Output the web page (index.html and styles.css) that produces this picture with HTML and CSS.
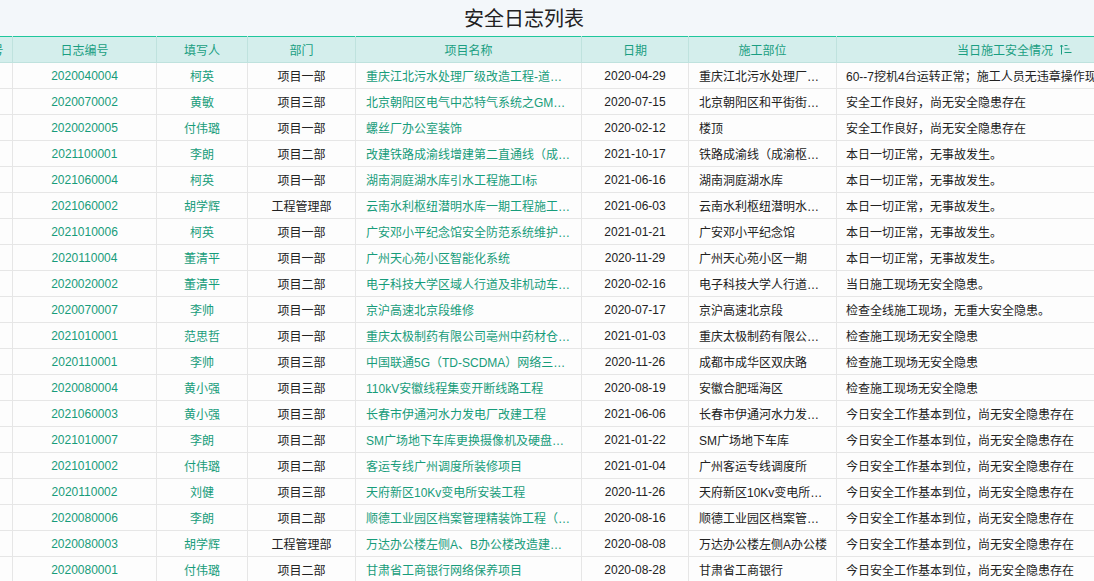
FILE: index.html
```html
<!DOCTYPE html>
<html lang="zh">
<head>
<meta charset="utf-8">
<title>安全日志列表</title>
<link rel="stylesheet" href="styles.css">
</head>
<body>
<div class="page">
  <div class="title-bar"><h1 class="title">安全日志列表</h1></div>
  <div class="grid-wrap">
    <table class="grid">
      <colgroup>
        <col class="c-no"><col class="c-id"><col class="c-person"><col class="c-dept"><col class="c-proj"><col class="c-date"><col class="c-place"><col class="c-status">
      </colgroup>
      <thead>
        <tr>
          <th>序号</th><th>日志编号</th><th>填写人</th><th>部门</th><th>项目名称</th><th>日期</th><th>施工部位</th>
          <th><span class="th-sort">当日施工安全情况<svg class="sort-icon" width="12" height="11" viewBox="0 0 12 11"><path d="M1.5 1v9.5M0 2.8L1.5 1 3 2.8" stroke="#1a9e82" stroke-width="1" fill="none"/><path d="M4.5 1.5h3M4.5 5h5M4.5 8.5h7" stroke="#1a9e82" stroke-width="1.2"/></svg></span></th>
        </tr>
      </thead>
      <tbody>
        <tr><td></td><td class="g">2020040004</td><td class="g">柯英</td><td>项目一部</td><td class="g l">重庆江北污水处理厂级改造工程-道路及管网工程</td><td>2020-04-29</td><td class="l p">重庆江北污水处理厂二级改造</td><td class="l">60--7挖机4台运转正常；施工人员无违章操作现象，安全帽佩戴齐全</td></tr>
        <tr><td></td><td class="g">2020070002</td><td class="g">黄敏</td><td>项目三部</td><td class="g l">北京朝阳区电气中芯特气系统之GM系统工程</td><td>2020-07-15</td><td class="l p">北京朝阳区和平街街道办事处</td><td class="l">安全工作良好，尚无安全隐患存在</td></tr>
        <tr><td></td><td class="g">2020020005</td><td class="g">付伟璐</td><td>项目一部</td><td class="g l">螺丝厂办公室装饰</td><td>2020-02-12</td><td class="l p">楼顶</td><td class="l">安全工作良好，尚无安全隐患存在</td></tr>
        <tr><td></td><td class="g">2021100001</td><td class="g">李朗</td><td>项目二部</td><td class="g l">改建铁路成渝线增建第二直通线（成渝枢纽）工程</td><td>2021-10-17</td><td class="l p">铁路成渝线（成渝枢纽）</td><td class="l">本日一切正常，无事故发生。</td></tr>
        <tr><td></td><td class="g">2021060004</td><td class="g">柯英</td><td>项目一部</td><td class="g l">湖南洞庭湖水库引水工程施工I标</td><td>2021-06-16</td><td class="l p">湖南洞庭湖水库</td><td class="l">本日一切正常，无事故发生。</td></tr>
        <tr><td></td><td class="g">2021060002</td><td class="g">胡学辉</td><td>工程管理部</td><td class="g l">云南水利枢纽潜明水库一期工程施工三标</td><td>2021-06-03</td><td class="l p">云南水利枢纽潜明水库大坝</td><td class="l">本日一切正常，无事故发生。</td></tr>
        <tr><td></td><td class="g">2021010006</td><td class="g">柯英</td><td>项目一部</td><td class="g l">广安邓小平纪念馆安全防范系统维护项目</td><td>2021-01-21</td><td class="l p">广安邓小平纪念馆</td><td class="l">本日一切正常，无事故发生。</td></tr>
        <tr><td></td><td class="g">2020110004</td><td class="g">董清平</td><td>项目一部</td><td class="g l">广州天心苑小区智能化系统</td><td>2020-11-29</td><td class="l p">广州天心苑小区一期</td><td class="l">本日一切正常，无事故发生。</td></tr>
        <tr><td></td><td class="g">2020020002</td><td class="g">董清平</td><td>项目二部</td><td class="g l">电子科技大学区域人行道及非机动车道改造工程</td><td>2020-02-16</td><td class="l p">电子科技大学人行道区域</td><td class="l">当日施工现场无安全隐患。</td></tr>
        <tr><td></td><td class="g">2020070007</td><td class="g">李帅</td><td>项目一部</td><td class="g l">京沪高速北京段维修</td><td>2020-07-17</td><td class="l p">京沪高速北京段</td><td class="l">检查全线施工现场，无重大安全隐患。</td></tr>
        <tr><td></td><td class="g">2021010001</td><td class="g">范思哲</td><td>项目一部</td><td class="g l">重庆太极制药有限公司亳州中药材仓储项目</td><td>2021-01-03</td><td class="l p">重庆太极制药有限公司仓库</td><td class="l">检查施工现场无安全隐患</td></tr>
        <tr><td></td><td class="g">2020110001</td><td class="g">李帅</td><td>项目三部</td><td class="g l">中国联通5G（TD-SCDMA）网络三期工程</td><td>2020-11-26</td><td class="l p">成都市成华区双庆路</td><td class="l">检查施工现场无安全隐患</td></tr>
        <tr><td></td><td class="g">2020080004</td><td class="g">黄小强</td><td>项目三部</td><td class="g l">110kV安徽线程集变开断线路工程</td><td>2020-08-19</td><td class="l p">安徽合肥瑶海区</td><td class="l">检查施工现场无安全隐患</td></tr>
        <tr><td></td><td class="g">2021060003</td><td class="g">黄小强</td><td>项目三部</td><td class="g l">长春市伊通河水力发电厂改建工程</td><td>2021-06-06</td><td class="l p">长春市伊通河水力发电厂</td><td class="l">今日安全工作基本到位，尚无安全隐患存在</td></tr>
        <tr><td></td><td class="g">2021010007</td><td class="g">李朗</td><td>项目二部</td><td class="g l">SM广场地下车库更换摄像机及硬盘录像机</td><td>2021-01-22</td><td class="l p">SM广场地下车库</td><td class="l">今日安全工作基本到位，尚无安全隐患存在</td></tr>
        <tr><td></td><td class="g">2021010002</td><td class="g">付伟璐</td><td>项目二部</td><td class="g l">客运专线广州调度所装修项目</td><td>2021-01-04</td><td class="l p">广州客运专线调度所</td><td class="l">今日安全工作基本到位，尚无安全隐患存在</td></tr>
        <tr><td></td><td class="g">2020110002</td><td class="g">刘健</td><td>项目三部</td><td class="g l">天府新区10Kv变电所安装工程</td><td>2020-11-26</td><td class="l p">天府新区10Kv变电所附近</td><td class="l">今日安全工作基本到位，尚无安全隐患存在</td></tr>
        <tr><td></td><td class="g">2020080006</td><td class="g">李朗</td><td>项目二部</td><td class="g l">顺德工业园区档案管理精装饰工程（二期）</td><td>2020-08-16</td><td class="l p">顺德工业园区档案管理楼</td><td class="l">今日安全工作基本到位，尚无安全隐患存在</td></tr>
        <tr><td></td><td class="g">2020080003</td><td class="g">胡学辉</td><td>工程管理部</td><td class="g l">万达办公楼左侧A、B办公楼改造建设工程</td><td>2020-08-08</td><td class="l p">万达办公楼左侧A办公楼</td><td class="l">今日安全工作基本到位，尚无安全隐患存在</td></tr>
        <tr><td></td><td class="g">2020080001</td><td class="g">付伟璐</td><td>项目二部</td><td class="g l">甘肃省工商银行网络保养项目</td><td>2020-08-28</td><td class="l p">甘肃省工商银行</td><td class="l">今日安全工作基本到位，尚无安全隐患存在</td></tr>
      </tbody>
    </table>
  </div>
</div>
</body>
</html>
```

FILE: styles.css
```css
html, body {
  margin: 0;
  padding: 0;
  background: #fdfdfd;
}
body {
  font-family: "Liberation Sans", "Noto Sans CJK SC", sans-serif;
  font-size: 12px;
  color: #222;
  overflow: hidden;
}
.page {
  width: 1094px;
  height: 581px;
  overflow: hidden;
}
.title-bar {
  height: 36px;
  background: #f3f7fa;
  display: flex;
  align-items: center;
  justify-content: center;
  padding-right: 46px;
}
.title {
  margin: 0;
  font-family: "Noto Sans CJK SC", sans-serif;
  font-size: 20px;
  font-weight: normal;
  line-height: 36px;
  color: #222;
}
.grid-wrap {
  overflow: hidden;
  width: 1094px;
}
.grid {
  margin-left: -30px;
  width: 1222px;
  table-layout: fixed;
  border-collapse: collapse;
  border-top: 1px solid #1fc79c;
}
.c-no { width: 42px; }
.c-id { width: 144px; }
.c-person { width: 91px; }
.c-dept { width: 108px; }
.c-proj { width: 226px; }
.c-date { width: 107px; }
.c-place { width: 148px; }
.c-status { width: 356px; }
.grid th {
  height: 25px;
  padding: 0 4px;
  background: #d4eeec;
  color: #1a9e82;
  font-weight: normal;
  border-left: 1px solid #bfe2de;
  border-right: 1px solid #bfe2de;
  border-bottom: 1px solid #bfe2de;
  white-space: nowrap;
  overflow: hidden;
  text-align: center;
}
.th-sort {
  display: inline-flex;
  align-items: center;
  gap: 7px;
}
.sort-icon {
  display: block;
}
.grid td {
  height: 25px;
  padding: 0 10px;
  border: 1px solid #e6e6e6;
  border-top: none;
  white-space: nowrap;
  overflow: hidden;
  text-overflow: ellipsis;
  text-align: center;
  color: #222;
}
.grid td.g { color: #179c7a; }
.grid td.l { text-align: left; }
.grid td.p { padding-right: 6px; }
.grid td:last-child { text-overflow: clip; padding-left: 9px; }
```
